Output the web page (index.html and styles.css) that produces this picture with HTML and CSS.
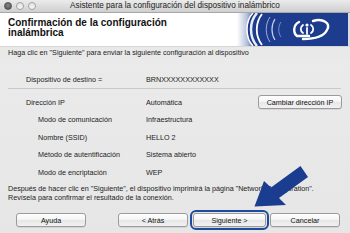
FILE: index.html
```html
<!DOCTYPE html>
<html lang="es">
<head>
<meta charset="utf-8">
<title>Asistente</title>
<link rel="stylesheet" href="styles.css">
</head>
<body>
<div class="window">
  <div class="titlebar">
    <div class="lights">
      <span class="light dark"></span>
      <span class="light"></span>
      <span class="light"></span>
    </div>
    <div class="title">Asistente para la configuración del dispositivo inalámbrico</div>
    <div></div>
  </div>
  <div class="header">
    <h1 class="heading">Confirmación de la configuración<br>inalámbrica</h1>
    <svg class="logo" width="113" height="33" viewBox="0 0 113 33">
      <defs>
        <linearGradient id="fade" x1="0" y1="0" x2="1" y2="0">
          <stop offset="0" stop-color="#ffffff"/>
          <stop offset="0.6" stop-color="#b9c4dc"/>
          <stop offset="1" stop-color="#5a74b0"/>
        </linearGradient>
      </defs>
      <rect x="0" y="0" width="113" height="33" fill="#1e3c8e"/>
      <path d="M0 0 H16 C8 8 8 25 16 33 H0 Z" fill="url(#fade)"/>
      <path d="M16 0 C8 8 8 25 16 33" stroke="#ffffff" stroke-width="1.5" fill="none"/>
      <path d="M20 0 C12 9 12 24 20 33" stroke="#e8ecf5" stroke-width="2.5" fill="none"/>
      <path d="M25 1 C18 10 18 23 25 32" stroke="#ffffff" stroke-width="1.8" fill="none"/>
      <path d="M33 4 C28 11 28 22 33 29" stroke="#9fb0d6" stroke-width="1" fill="none"/>
      <path d="M38 6 C34 12 34 21 38 27" stroke="#c7d1e8" stroke-width="1.2" fill="none"/>
      <path d="M44 9 C41 13 41 20 44 24" stroke="#8fa3d0" stroke-width="0.8" fill="none"/>
      <g stroke="#ffffff" fill="none" stroke-linecap="round">
        <path d="M62 9 C56 12 56 20 60 23 L72 23" stroke-width="2.4"/>
        <path d="M66 12 C63 14 63 18 66 20" stroke-width="1.8"/>
        <path d="M70 15 L70 21" stroke-width="1.8"/>
        <path d="M74 12 C77 14 77 18 74 20" stroke-width="1.8"/>
        <path d="M76 8 C86 5 94 10 90 17 C87 23 78 26 66 26" stroke-width="2.4"/>
      </g>
      <circle cx="70" cy="12" r="1.6" fill="#ffffff"/>
      <rect x="111" y="0" width="2" height="33" fill="#d9dbe0"/>
    </svg>
  </div>
  <div class="intro">Haga clic en "Siguiente" para enviar la siguiente configuración al dispositivo</div>
  <div class="content">
    <div class="row target">
      <span class="label">Dispositivo de destino =</span>
      <span class="value">BRNXXXXXXXXXXXX</span>
    </div>
    <div class="separator"></div>
    <div class="row ip">
      <span class="label">Dirección IP</span>
      <span class="value">Automática</span>
      <button class="btn change">Cambiar dirección IP</button>
    </div>
    <div class="row sub">
      <span class="label">Modo de comunicación</span>
      <span class="value">Infraestructura</span>
    </div>
    <div class="row sub">
      <span class="label">Nombre (SSID)</span>
      <span class="value">HELLO 2</span>
    </div>
    <div class="row sub">
      <span class="label">Método de autentificación</span>
      <span class="value">Sistema abierto</span>
    </div>
    <div class="row sub">
      <span class="label">Modo de encriptación</span>
      <span class="value">WEP</span>
    </div>
  </div>
  <p class="note">Después de hacer clic en "Siguiente", el dispositivo imprimirá la página "Network Configuration".<br>Revísela para confirmar el resultado de la conexión.</p>
  <div class="actions">
    <button class="btn help">Ayuda</button>
    <button class="btn back">&lt; Atrás</button>
    <button class="btn next">Siguiente &gt;</button>
    <button class="btn cancel">Cancelar</button>
  </div>
  <svg class="arrow" width="350" height="233" viewBox="0 0 350 233">
    <polygon points="300.5,166 308,177 279,198 286,205 254.5,206.5 264,181 271,187.5" fill="#1a3d8f"/>
  </svg>
</div>
</body>
</html>
```

FILE: styles.css
```css
* { box-sizing: border-box; }
html, body { margin: 0; padding: 0; }
body {
  width: 350px;
  height: 233px;
  overflow: hidden;
  font-family: "Liberation Sans", Arial, sans-serif;
  color: #1a1a1a;
  background: #ececec;
}
.window {
  position: relative;
  width: 350px;
  height: 233px;
  background: linear-gradient(#ececec, #e6e6e6);
}
.titlebar {
  height: 13px;
  display: grid;
  grid-template-columns: 1fr auto 1fr;
  align-items: center;
  background: linear-gradient(#ebebeb, #cfcfcf);
  border-bottom: 1px solid #a8a8a8;
}
.lights {
  display: flex;
  gap: 4px;
  padding-left: 4px;
}
.light {
  width: 8px;
  height: 8px;
  border-radius: 50%;
  background: linear-gradient(#e4e4e4, #f6f6f6);
  border: 1px solid #a2a2a2;
}
.light.dark {
  background: radial-gradient(circle at 50% 40%, #8a8a8a, #4a4a4a);
  border-color: #555;
}
.title {
  font-size: 8.2px;
  color: #222;
  line-height: 12px;
  white-space: nowrap;
}
.header {
  height: 34px;
  background: #ffffff;
  display: flex;
  justify-content: space-between;
  align-items: flex-start;
  border-bottom: 1px solid #d6d6d6;
}
.heading {
  margin: 0;
  padding: 5px 0 0 8px;
  font-size: 10px;
  line-height: 10px;
  font-weight: bold;
  color: #111;
}
.logo { display: block; }
.intro {
  height: 12px;
  line-height: 11px;
  padding-left: 8px;
  font-size: 7.2px;
  color: #222;
  background: #e9e9e9;
  white-space: nowrap;
}
.content {
  margin: 11px 8px 0 8px;
}
.row {
  display: grid;
  grid-template-columns: 120px 1fr auto;
  align-items: center;
  padding-left: 18px;
  font-size: 7.2px;
  color: #222;
  white-space: nowrap;
}
.row.target { height: 18px; }
.row.ip { height: 18px; }
.row.sub { height: 17.5px; }
.row.sub .label { padding-left: 12px; }
.separator {
  height: 1px;
  margin: 0 1px 4px 0;
  background: #c9c9c9;
}
.btn {
  font-family: "Liberation Sans", Arial, sans-serif;
  font-size: 7.2px;
  color: #111;
  height: 14px;
  padding: 0;
  border: 1px solid #9b9b9b;
  border-radius: 3px;
  background: linear-gradient(#ffffff, #f4f4f4 50%, #e6e6e6 51%, #f2f2f2);
  box-shadow: 0 1px 0 rgba(0,0,0,0.08);
}
.btn.change {
  width: 84px;
  height: 14px;
}
.note {
  margin: 4px 0 0 8px;
  font-size: 7.2px;
  line-height: 8.5px;
  color: #222;
  white-space: nowrap;
}
.actions {
  display: flex;
  margin-top: 11px;
  padding-left: 16px;
}
.help { width: 70px; }
.back { width: 70px; margin-left: 32px; }
.next {
  width: 73px;
  margin-left: 5px;
  outline: 2px solid #1d4c9e;
  outline-offset: 1.5px;
}
.cancel { width: 70px; margin-left: 4px; }
.arrow {
  position: absolute;
  left: 0;
  top: 0;
  pointer-events: none;
}
```
